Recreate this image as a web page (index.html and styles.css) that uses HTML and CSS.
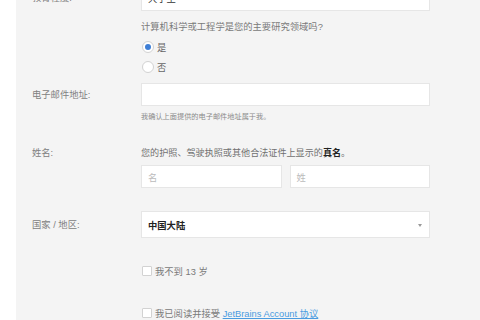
FILE: index.html
```html
<!DOCTYPE html>
<html lang="zh-CN">
<head>
<meta charset="utf-8">
<title>注册</title>
<link rel="stylesheet" href="styles.css">
</head>
<body>
<div class="page">
  <div class="strip"></div>
  <main class="panel">
    <form class="form">
      <div class="row row-edu">
        <label class="label">教育程度:</label>
        <div class="select select-edu"><span class="select-text normal">大学生</span><span class="arrow"></span></div>
      </div>

      <div class="row row-question">
        <span></span>
        <div class="field">
          <p class="question">计算机科学或工程学是您的主要研究领域吗?</p>
          <div class="radios">
            <div class="radio-row"><span class="radio checked"></span><span class="radio-text">是</span></div>
            <div class="radio-row"><span class="radio"></span><span class="radio-text">否</span></div>
          </div>
        </div>
      </div>

      <div class="row row-email">
        <label class="label">电子邮件地址:</label>
        <div class="input"></div>
      </div>
      <div class="row row-help">
        <span></span>
        <p class="help">我确认上面提供的电子邮件地址属于我。</p>
      </div>

      <div class="row row-name">
        <label class="label">姓名:</label>
        <p class="desc">您的护照、驾驶执照或其他合法证件上显示的<b>真名</b>。</p>
      </div>
      <div class="row row-name-inputs">
        <span></span>
        <div class="pair">
          <div class="input"><span class="placeholder">名</span></div>
          <div class="input"><span class="placeholder">姓</span></div>
        </div>
      </div>

      <div class="row row-country">
        <label class="label">国家 / 地区:</label>
        <div class="select select-country"><span class="select-text">中国大陆</span><span class="arrow"></span></div>
      </div>

      <div class="row row-check1">
        <span></span>
        <div class="check-row"><span class="checkbox"></span><span class="check-text">我不到 13 岁</span></div>
      </div>
      <div class="row row-check2">
        <span></span>
        <div class="check-row"><span class="checkbox"></span><span class="check-text">我已阅读并接受 <a class="link" href="#">JetBrains Account 协议</a></span></div>
      </div>
    </form>
  </main>
</div>
</body>
</html>
```

FILE: styles.css
```css
* { box-sizing: border-box; }
html, body {
  margin: 0;
  padding: 0;
  width: 480px;
  height: 320px;
  overflow: hidden;
  background: #ffffff;
  font-family: "Liberation Sans", "Noto Sans CJK SC", sans-serif;
  color: #777777;
}
.page {
  display: flex;
  width: 480px;
  height: 320px;
}
.strip {
  width: 16px;
  flex: none;
  background: #ffffff;
}
.panel {
  flex: 1;
  background: #f4f4f4;
  padding-left: 16px;
  overflow: hidden;
}
.form {
  display: flex;
  flex-direction: column;
  margin: 0;
}
.row {
  display: grid;
  grid-template-columns: 109px 289px;
  align-items: center;
}
.label {
  font-size: 9.3px;
  line-height: 14px;
  color: #808080;
}
p { margin: 0; }

.select, .input {
  background: #ffffff;
  border: 1px solid #e6e6e6;
  position: relative;
  display: flex;
  align-items: center;
  padding-left: 6px;
}
.select-edu { height: 26px; }
.row-edu { margin-top: -15px; }
.select-country { height: 27px; }
.select-text {
  font-size: 9.3px;
  font-weight: bold;
  color: #222222;
}
.select-text.normal { font-weight: normal; color: #333; }
.arrow {
  position: absolute;
  right: 7px;
  top: 50%;
  margin-top: -1px;
  width: 0;
  height: 0;
  border-left: 2px solid transparent;
  border-right: 2px solid transparent;
  border-top: 3px solid #999999;
}

.row-question { margin-top: 9px; align-items: start; }
.question {
  font-size: 9.3px;
  line-height: 14px;
  color: #7a7a7a;
}
.radios {
  margin-top: 3px;
  display: flex;
  flex-direction: column;
}
.radio-row {
  height: 20px;
  display: flex;
  align-items: center;
  gap: 3px;
  padding-left: 1px;
}
.radio {
  width: 12px;
  height: 12px;
  border-radius: 50%;
  border: 1px solid #d2d2d2;
  background: #ffffff;
  position: relative;
}
.radio.checked::after {
  content: "";
  position: absolute;
  left: 2px;
  top: 2px;
  width: 6px;
  height: 6px;
  border-radius: 50%;
  background: #3f7fd6;
}
.radio-text {
  font-size: 9.3px;
  color: #666666;
}

.row-email { margin-top: 6px; }
.input { height: 23px; }
.row-help { margin-top: 6px; }
.help {
  font-size: 7.2px;
  line-height: 10px;
  color: #8a8a8a;
}

.row-name { margin-top: 24px; }
.desc {
  font-size: 9.1px;
  line-height: 14px;
  color: #707070;
}
.desc b { color: #222222; }

.row-name-inputs { margin-top: 5px; }
.pair {
  display: grid;
  grid-template-columns: 1fr 1fr;
  gap: 8px;
}
.placeholder {
  font-size: 9.3px;
  color: #bbbbbb;
}

.row-country { margin-top: 23px; }

.row-check1 { margin-top: 26px; }
.row-check2 { margin-top: 28px; }
.check-row {
  height: 14px;
  display: flex;
  align-items: center;
  gap: 3px;
  padding-left: 1px;
}
.checkbox {
  width: 10px;
  height: 10px;
  border: 1px solid #d2d2d2;
  background: #ffffff;
  border-radius: 1px;
}
.check-text {
  font-size: 9.3px;
  color: #7a7a7a;
}
.link {
  color: #4a9be0;
  text-decoration: underline;
}
```
